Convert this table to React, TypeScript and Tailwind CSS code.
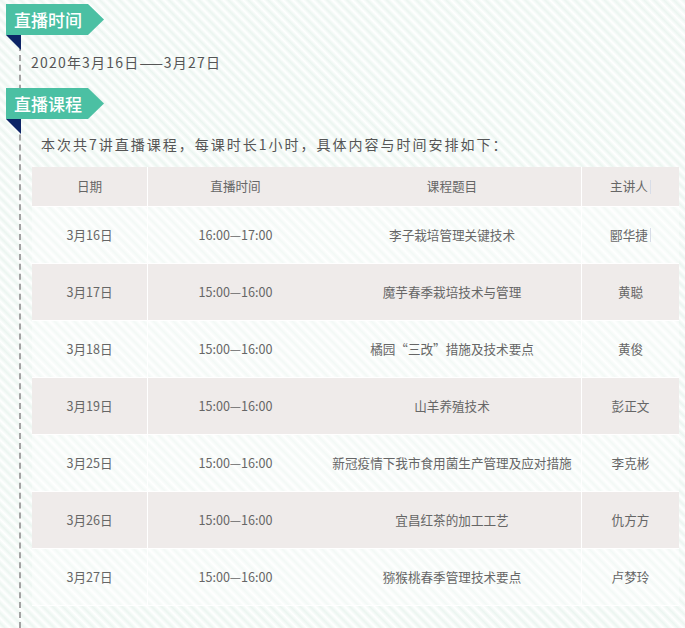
import type { ReactNode } from 'react';

const rows = [
  { date: '3月16日', time: '16:00—17:00', topic: '李子栽培管理关键技术', speaker: '郾华捷', caret: true },
  { date: '3月17日', time: '15:00—16:00', topic: '魔芋春季栽培技术与管理', speaker: '黄聪' },
  { date: '3月18日', time: '15:00—16:00', topic: '橘园“三改”措施及技术要点', speaker: '黄俊' },
  { date: '3月19日', time: '15:00—16:00', topic: '山羊养殖技术', speaker: '彭正文' },
  { date: '3月25日', time: '15:00—16:00', topic: '新冠疫情下我市食用菌生产管理及应对措施', speaker: '李克彬' },
  { date: '3月26日', time: '15:00—16:00', topic: '宜昌红茶的加工工艺', speaker: '仇方方' },
  { date: '3月27日', time: '15:00—16:00', topic: '猕猴桃春季管理技术要点', speaker: '卢梦玲' },
];

function Banner({ title, className }: { title: string; className?: string }) {
  return (
    <div
      className={`h-[31px] w-[98px] bg-[#4bc0a3] pl-[8px] flex items-center text-white text-[17px] font-medium leading-none [clip-path:polygon(0_0,82px_0,98px_50%,82px_100%,0_100%)] ${className ?? ''}`}
    >
      {title}
    </div>
  );
}

function Fold() {
  return <div className="-ml-[15px] w-[15px] h-[15px] bg-[#0d2466] [clip-path:polygon(0_0,100%_0,100%_100%)]" />;
}

function Cell({ children, className }: { children: ReactNode; className?: string }) {
  return <div className={`flex items-center justify-center ${className ?? ''}`}>{children}</div>;
}

function Caret() {
  return <span className="ml-[2px] inline-block w-px h-[14px] bg-[#d8dde8]" />;
}

export default function App() {
  return (
    <div className="w-[685px] h-[628px] overflow-hidden flex flex-col pt-[4px] font-['Noto_Sans_CJK_SC','Noto_Sans',sans-serif] bg-white bg-[image:repeating-linear-gradient(45deg,#ffffff_0px,#ebf5f0_3.5px,#ffffff_7px)]">
      <Banner title="直播时间" className="ml-[6px]" />
      <div className="flex-1 ml-[19px] border-l-2 border-dashed border-[#a3a3a3]">
        <Fold />
        {/* 直播时间 */}
        <p className="mt-[2px] pl-[10px] text-[14px] leading-[20px] text-[#555] tracking-[1.2px]">
          2020年3月16日<span className="tracking-normal mr-[1px]">——</span>3月27日
        </p>

        <Banner title="直播课程" className="-ml-[15px] mt-[16px]" />
        <Fold />
        <p className="pl-[20px] text-[14px] leading-[20px] text-[#555] tracking-[2px]">
          本次共7讲直播课程，每课时长1小时，具体内容与时间安排如下：
        </p>

        {/* 课程表 */}
        <div className="mt-[13px] ml-[11px] w-[647px] text-[12.6px] text-[#666]">
          <div className="flex h-[40px] bg-[#efebea] border-b border-white">
            <Cell className="w-[116px] border-r border-white">日期</Cell>
            <Cell className="w-[175px]">直播时间</Cell>
            <Cell className="w-[259px] border-r border-white">课程题目</Cell>
            <Cell className="w-[97px]">
              主讲人
              <Caret />
            </Cell>
          </div>
          {rows.map((r, i) => (
            <div
              key={r.date}
              className={`flex h-[57px] border-b border-white ${i % 2 === 1 ? 'bg-[#efebea]' : 'bg-white/40'}`}
            >
              <Cell className="w-[116px] border-r border-white">{r.date}</Cell>
              <Cell className="w-[175px]">{r.time}</Cell>
              <Cell className="w-[259px] border-r border-white">{r.topic}</Cell>
              <Cell className="w-[97px]">
                {r.speaker}
                {r.caret && <Caret />}
              </Cell>
            </div>
          ))}
        </div>
      </div>
    </div>
  );
}
